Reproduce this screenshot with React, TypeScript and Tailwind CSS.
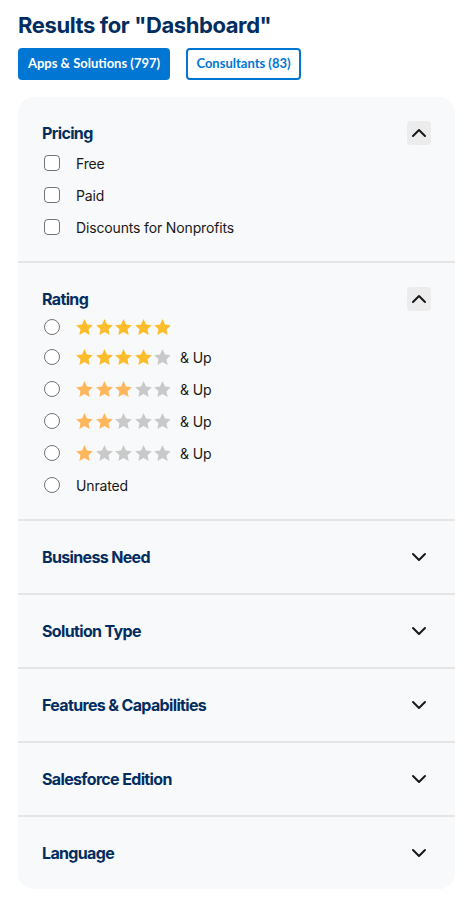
import { ChevronDown, ChevronUp } from "lucide-react";

const heading = { fontFamily: "Inter, 'Liberation Sans', sans-serif" };
const btnFont = { fontFamily: "Lato, 'Liberation Sans', sans-serif" };

function Star({ color }: { color: string }) {
  return (
    <svg viewBox="1.6 1.5 20.8 19.8" className="w-[17px] h-4" fill={color}>
      <path d="M12 1.6l3.1 6.6 7.2.9-5.3 5 1.4 7.1L12 17.7l-6.4 3.5L7 14.1l-5.3-5 7.2-.9z" />
    </svg>
  );
}

function Stars({ count, color }: { count: number; color: string }) {
  return (
    <div className="flex items-center gap-[2.5px]">
      {[0, 1, 2, 3, 4].map((i) => (
        <Star key={i} color={i < count ? color : "#c9c9c9"} />
      ))}
    </div>
  );
}

function Checkbox() {
  return <span className="ml-[2px] w-4 h-4 rounded-[4px] border border-[#747474] bg-white shrink-0" />;
}

function Radio() {
  return <span className="ml-[2px] w-4 h-4 rounded-full border border-[#747474] bg-white shrink-0" />;
}

function SectionHeader({ title, open }: { title: string; open?: boolean }) {
  return (
    <div className="flex items-center justify-between h-6">
      <h2 style={heading} className="text-[16px] font-bold tracking-[-0.65px] text-[#032d60]">
        {title}
      </h2>
      {open ? (
        <button className="w-6 h-6 rounded-[4px] bg-[#ececec] flex items-center justify-center">
          <ChevronUp className="w-6 h-6 text-[#181818]" strokeWidth={2} />
        </button>
      ) : (
        <button className="w-6 h-6 flex items-center justify-center">
          <ChevronDown className="w-6 h-6 text-[#181818]" strokeWidth={2} />
        </button>
      )}
    </div>
  );
}

const collapsed = ["Business Need", "Solution Type", "Features & Capabilities", "Salesforce Edition", "Language"];

const ratings = [
  { count: 5, color: "#fdbc2a", up: false },
  { count: 4, color: "#fdbc2a", up: true },
  { count: 3, color: "#ffb75d", up: true },
  { count: 2, color: "#ffb75d", up: true },
  { count: 1, color: "#ffb75d", up: true },
];

export default function App() {
  return (
    <div
      className="min-h-screen bg-white px-[18px] pt-[10px] text-[#181818]"
      style={{ fontFamily: "Inter, 'Noto Sans', sans-serif" }}
    >
      <h1 style={heading} className="text-[22px] font-bold tracking-[-0.4px] text-[#032d60] leading-[30px]">
        Results for "Dashboard"
      </h1>

      <div className="flex gap-4 mt-[8px]" style={btnFont}>
        <button className="h-8 w-[152px] rounded-[4px] bg-[#0176d3] text-white text-[13px] font-bold">
          Apps &amp; Solutions (797)
        </button>
        <button className="h-8 w-[115px] rounded-[4px] border-2 border-[#0176d3] text-[#0176d3] text-[13px] font-bold">
          Consultants (83)
        </button>
      </div>

      <div className="mt-[17px] bg-[#f8f9fa] rounded-2xl w-[437px]">
        <section className="px-6 pt-6 pb-[18px]">
          <SectionHeader title="Pricing" open />
          <ul className="mt-[2px]">
            {["Free", "Paid", "Discounts for Nonprofits"].map((l) => (
              <li key={l} className="h-8 flex items-center gap-4 text-[14px] tracking-[-0.15px]">
                <Checkbox />
                <span>{l}</span>
              </li>
            ))}
          </ul>
        </section>

        <div className="h-[2px] bg-[#e5e5e5]" />

        <section className="px-6 pt-6 pb-[18px]">
          <SectionHeader title="Rating" open />
          <ul className="mt-[2px]">
            {ratings.map((r, i) => (
              <li
                key={r.count}
                className={`${i === 0 ? "h-[28px]" : "h-8"} flex items-center gap-4 text-[14px] tracking-[-0.15px]`}
              >
                <Radio />
                <div className="flex items-center gap-[9px]">
                  <Stars count={r.count} color={r.color} />
                  {r.up && <span>&amp; Up</span>}
                </div>
              </li>
            ))}
            <li className="h-8 flex items-center gap-4 text-[14px] tracking-[-0.15px]">
              <Radio />
              <span>Unrated</span>
            </li>
          </ul>
        </section>

        {collapsed.map((t) => (
          <div key={t}>
            <div className="h-[2px] bg-[#e5e5e5]" />
            <section className="px-6 py-6">
              <SectionHeader title={t} />
            </section>
          </div>
        ))}
      </div>
    </div>
  );
}
